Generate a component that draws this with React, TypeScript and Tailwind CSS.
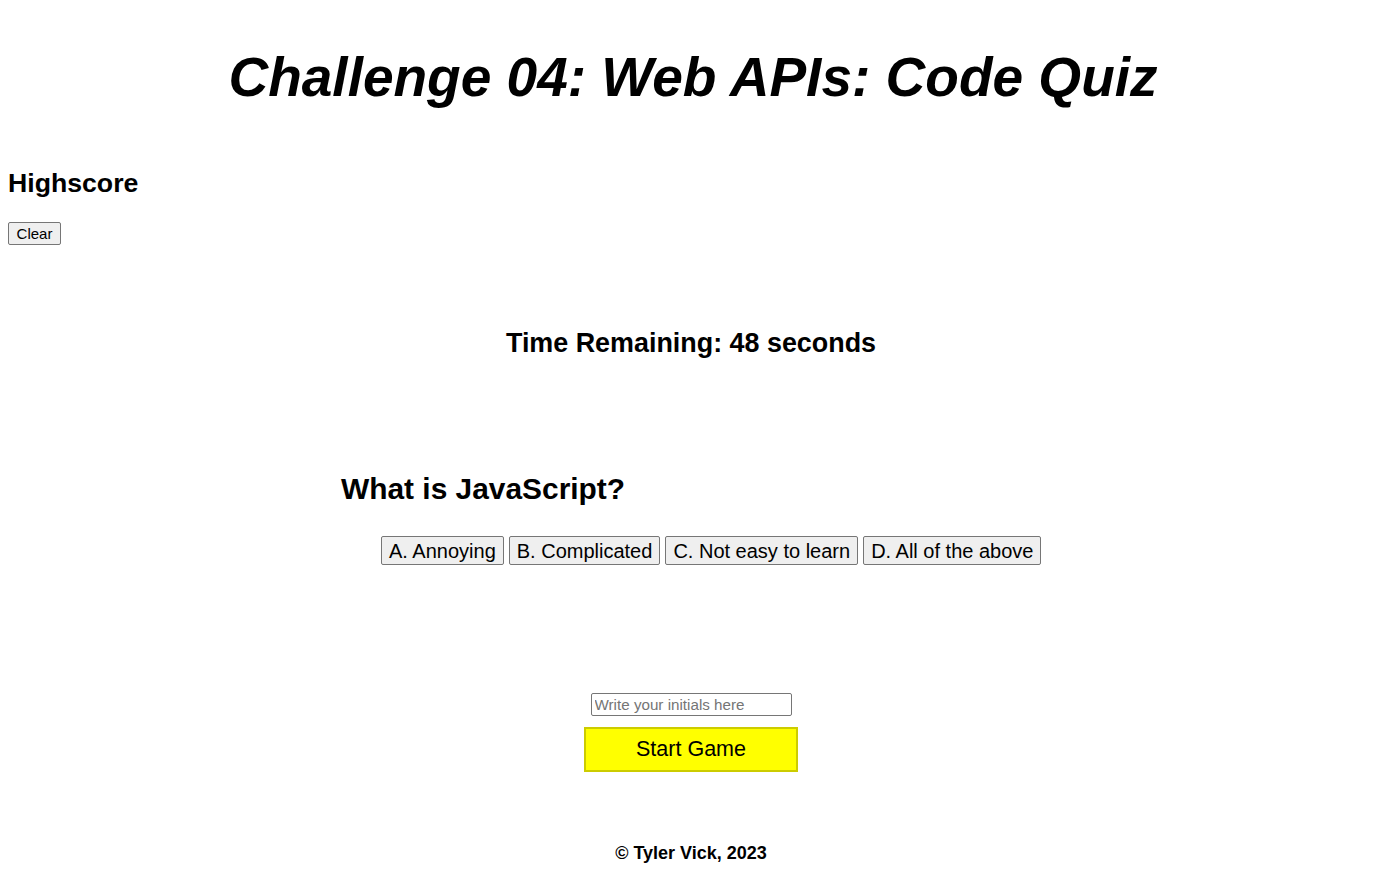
import React from "react";

export default function App() {
  const answers = ["A. Annoying", "B. Complicated", "C. Not easy to learn", "D. All of the above"];
  return (
    <div className="min-h-[896px] bg-white text-black font-['Liberation_Sans',Arial,sans-serif]">
      <h1 className="pt-[50px] text-center text-[55px] leading-none font-bold italic pl-[4px]">
        Challenge 04: Web APIs: Code Quiz
      </h1>
      <section className="mt-[65px] px-[8px]">
        <h2 className="text-[26.67px] leading-none font-bold">Highscore</h2>
        <button className="block mt-[25px] h-[23px] w-[53px] border border-[#767676] rounded-[2px] bg-[#efefef] text-[15px] leading-none">
          Clear
        </button>
      </section>
      <h2 className="mt-[85px] text-center text-[26.9px] leading-none font-bold">
        Time Remaining: 48 seconds
      </h2>
      <div className="mt-[117px] pl-[341px]">
        <h2 className="text-[29.9px] leading-none font-bold">What is JavaScript?</h2>
        <div className="mt-[33px] pl-[40px] flex gap-[5px]">
          {answers.map((a) => (
            <button
              key={a}
              className="h-[29px] px-[7px] border border-[#767676] rounded-[2px] bg-[#efefef] text-[20px] leading-none"
            >
              {a}
            </button>
          ))}
        </div>
      </div>
      <div className="mt-[128px] flex flex-col items-center">
        <input
          placeholder="Write your initials here"
          className="w-[201px] h-[23px] px-[3px] border border-[#767676] rounded-[2px] text-[15.2px] placeholder:text-[#757575] outline-none"
        />
        <button className="mt-[11px] w-[214px] h-[45px] bg-[#ffff00] border-2 border-[#cccc00] text-[21.5px] leading-none">
          Start Game
        </button>
      </div>
      <footer className="mt-[72px] text-center text-[18px] leading-none font-bold">© Tyler Vick, 2023</footer>
    </div>
  );
}
